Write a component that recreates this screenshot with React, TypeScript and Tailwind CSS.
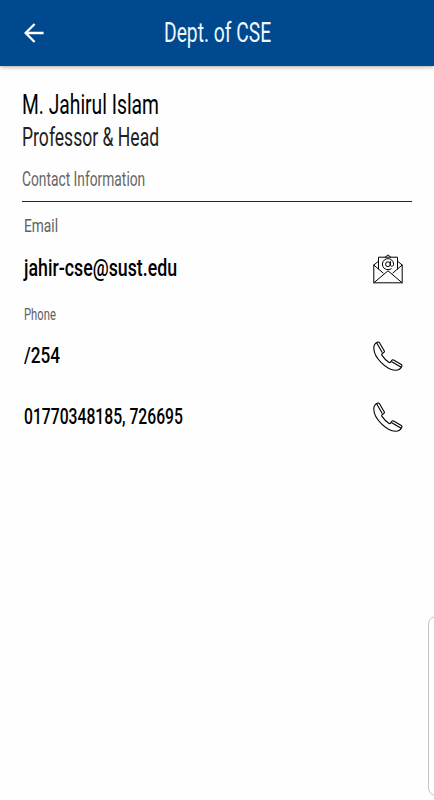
import { useLayoutEffect, useRef, useState } from 'react';
import clsx from 'clsx';

type CondensedProps = {
    text: string;
    width: number;
    className?: string;
};

// Squeezes the line horizontally so it fills `width`, like a condensed face
function Condensed({ text, width, className }: CondensedProps) {
    const ref = useRef<HTMLSpanElement>(null);
    const [scale, setScale] = useState(0.7);

    useLayoutEffect(() => {
        if (ref.current) setScale(width / ref.current.offsetWidth);
    }, [text, width]);

    return (
        <span className={clsx('flex items-center', className)} style={{ width }}>
            <span
                ref={ref}
                className="inline-block shrink-0 origin-left whitespace-nowrap"
                style={{ transform: `scaleX(${scale})` }}
            >
                {text}
            </span>
        </span>
    );
}

function BackIcon() {
    return (
        <svg className="h-5 w-5" viewBox="0 0 20 20" fill="none" stroke="currentColor" strokeWidth="2.3">
            <path d="M19.6 10H1.8M10.6 1 1.6 10l9 9" />
        </svg>
    );
}

function MailIcon() {
    return (
        <svg
            className="h-[30px] w-[30px]"
            viewBox="0 0 30 30"
            fill="none"
            stroke="currentColor"
            strokeWidth="1"
            strokeLinejoin="round"
            strokeLinecap="round"
        >
            <path d="M5.5 7.2.8 11v17.8h28.4V11l-4.7-3.8" />
            <path d="M5.5 15V3.2h19V15" />
            <path d="M12.2 3.2 15 .9l2.8 2.3" />
            <path d="m.8 11 9.3 8M29.2 11l-9.3 8M.8 28.8 15 16.8l14.2 12" />
            <path d="M18.2 14.8A5.6 5.6 0 1 1 20.6 10.2c0 2.8-3.2 2.6-3.2.6V7.6" />
            <circle cx="15" cy="10.2" r="2.4" />
        </svg>
    );
}

function PhoneIcon() {
    return (
        <svg
            className="h-[30px] w-[30px]"
            viewBox="0 0 30 30"
            fill="none"
            stroke="currentColor"
            strokeWidth="1.1"
            strokeLinejoin="round"
            strokeLinecap="round"
        >
            <path d="M4.8 1.1C2.2 2.2.7 4.2.8 7.2 1 16.5 13.2 29 22.6 29.2c3 .1 5-1.4 6.2-4 .3-.7.1-1.3-.5-1.7l-7.7-4.5c-.7-.4-1.4-.2-1.8.4l-1.3 1.7c-.4.5-1.1.6-1.7.2-2.5-1.7-5-4.2-6.8-6.9-.4-.6-.3-1.2.2-1.7l1.7-1.3c.5-.4.6-1.1.3-1.7L6.5 1.7c-.4-.6-1-.9-1.7-.6Z" />
            <path d="m3.9 2.2 5.2 9.1M18.7 20.8l9.1 5.3" />
        </svg>
    );
}

export default function App() {
    return (
        <div className="relative flex h-[800px] w-full flex-col overflow-hidden bg-[#fefefe] font-['Roboto',sans-serif] text-black">
            <header className="z-10 flex h-[66px] shrink-0 items-center bg-[#00498f] pl-6 text-white shadow-[0_1px_4px_rgba(0,0,0,0.35)]">
                <button className="mb-px mr-[120px]" aria-label="Back">
                    <BackIcon />
                </button>
                <Condensed text="Dept. of CSE" width={107} className="h-[66px] text-[27px] text-[#eef9ff]" />
            </header>

            <main className="flex flex-col px-[22px] pt-[22px]">
                <Condensed text="M. Jahirul Islam" width={137} className="h-[34px] text-[27px] font-[450]" />
                <Condensed text="Professor & Head" width={137} className="h-[31px] text-[25px] font-[450] text-[#222]" />
                <Condensed text="Contact Information" width={123} className="mt-[15px] h-6 text-[19.5px] text-[#666]" />
                <hr className="mt-[9px] border-t border-[#222]" />

                <section className="flex flex-col pl-0.5 pr-[9.5px] pt-3">
                    <Condensed text="Email" width={34} className="h-6 text-[19px] text-[#606060]" />
                    <div className="mt-4 flex h-[30px] items-center justify-between">
                        <Condensed text="jahir-cse@sust.edu" width={153} className="text-[23px] font-[460]" />
                        <MailIcon />
                    </div>
                    <Condensed text="Phone" width={32} className="mt-[21px] h-5 text-[16.5px] text-[#606060]" />
                    <div className="mt-4 flex h-[30px] items-center justify-between">
                        <Condensed text="/254" width={36} className="text-[21.5px] font-[460]" />
                        <PhoneIcon />
                    </div>
                    <div className="mt-[31px] flex h-[30px] items-center justify-between">
                        <Condensed text="01770348185, 726695" width={159} className="text-[21.5px] font-[460]" />
                        <PhoneIcon />
                    </div>
                </section>
            </main>

            {/* edge panel handle */}
            <div className="absolute -right-2.5 top-[616px] h-[180px] w-4 rounded-lg border border-[#c4c4c4] bg-white" />
        </div>
    );
}
